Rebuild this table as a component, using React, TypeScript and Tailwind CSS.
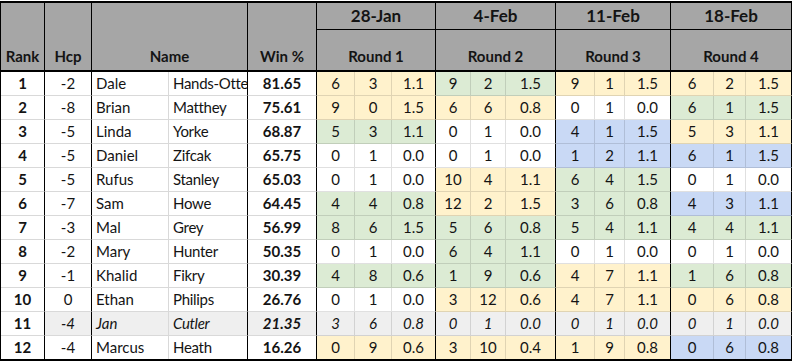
import React from 'react'

type Color = 'y' | 'g' | 'b' | 'w' | 'x'

interface Player {
    rank: number
    hcp: string
    first: string
    last: string
    win: string
    rounds: [string, string, string, Color][]
    muted?: boolean
}

const players: Player[] = [
    { rank: 1, hcp: '-2', first: 'Dale', last: 'Hands-Otte', win: '81.65', rounds: [['6', '3', '1.1', 'y'], ['9', '2', '1.5', 'g'], ['9', '1', '1.5', 'y'], ['6', '2', '1.5', 'y']] },
    { rank: 2, hcp: '-8', first: 'Brian', last: 'Matthey', win: '75.61', rounds: [['9', '0', '1.5', 'y'], ['6', '6', '0.8', 'y'], ['0', '1', '0.0', 'w'], ['6', '1', '1.5', 'g']] },
    { rank: 3, hcp: '-5', first: 'Linda', last: 'Yorke', win: '68.87', rounds: [['5', '3', '1.1', 'g'], ['0', '1', '0.0', 'w'], ['4', '1', '1.5', 'b'], ['5', '3', '1.1', 'y']] },
    { rank: 4, hcp: '-5', first: 'Daniel', last: 'Zifcak', win: '65.75', rounds: [['0', '1', '0.0', 'w'], ['0', '1', '0.0', 'w'], ['1', '2', '1.1', 'b'], ['6', '1', '1.5', 'b']] },
    { rank: 5, hcp: '-5', first: 'Rufus', last: 'Stanley', win: '65.03', rounds: [['0', '1', '0.0', 'w'], ['10', '4', '1.1', 'y'], ['6', '4', '1.5', 'g'], ['0', '1', '0.0', 'w']] },
    { rank: 6, hcp: '-7', first: 'Sam', last: 'Howe', win: '64.45', rounds: [['4', '4', '0.8', 'g'], ['12', '2', '1.5', 'y'], ['3', '6', '0.8', 'g'], ['4', '3', '1.1', 'b']] },
    { rank: 7, hcp: '-3', first: 'Mal', last: 'Grey', win: '56.99', rounds: [['8', '6', '1.5', 'g'], ['5', '6', '0.8', 'g'], ['5', '4', '1.1', 'g'], ['4', '4', '1.1', 'g']] },
    { rank: 8, hcp: '-2', first: 'Mary', last: 'Hunter', win: '50.35', rounds: [['0', '1', '0.0', 'w'], ['6', '4', '1.1', 'g'], ['0', '1', '0.0', 'w'], ['0', '1', '0.0', 'w']] },
    { rank: 9, hcp: '-1', first: 'Khalid', last: 'Fikry', win: '30.39', rounds: [['4', '8', '0.6', 'g'], ['1', '9', '0.6', 'g'], ['4', '7', '1.1', 'y'], ['1', '6', '0.8', 'g']] },
    { rank: 10, hcp: '0', first: 'Ethan', last: 'Philips', win: '26.76', rounds: [['0', '1', '0.0', 'w'], ['3', '12', '0.6', 'y'], ['4', '7', '1.1', 'y'], ['0', '6', '0.8', 'y']] },
    { rank: 11, hcp: '-4', first: 'Jan', last: 'Cutler', win: '21.35', muted: true, rounds: [['3', '6', '0.8', 'x'], ['0', '1', '0.0', 'x'], ['0', '1', '0.0', 'x'], ['0', '1', '0.0', 'x']] },
    { rank: 12, hcp: '-4', first: 'Marcus', last: 'Heath', win: '16.26', rounds: [['0', '9', '0.6', 'y'], ['3', '10', '0.4', 'y'], ['1', '9', '0.8', 'y'], ['0', '6', '0.8', 'b']] },
]

const fills: Record<Color, string> = {
    y: 'bg-[#fff2cc]',
    g: 'bg-[#dcebd4]',
    b: 'bg-[#c9d9f5]',
    w: 'bg-white',
    x: 'bg-[#efefef]',
}

const dates = ['28-Jan', '4-Feb', '11-Feb', '18-Feb']

export default function App() {
    return (
        <div className="w-[792px] h-[361px] bg-white pt-px font-['Lato','Open_Sans',sans-serif] text-[#141414] overflow-hidden">
            <div className="grid grid-cols-[44px_47px_77px_79px_69px_38px_37px_44px_35px_35px_50px_39px_30px_46px_43px_32px_46px] border-l border-t-2 border-b-2 border-black">
                {/* Header */}
                <div className="row-span-2 h-[69px] bg-[#a6a6a6] border-r border-b-2 border-black flex items-end justify-center pb-[3px] font-bold text-[15px]">Rank</div>
                <div className="row-span-2 h-[69px] bg-[#a6a6a6] border-r border-b-2 border-black flex items-end justify-center pb-[3px] font-bold text-[15px]">Hcp</div>
                <div className="col-span-2 row-span-2 h-[69px] bg-[#a6a6a6] border-r border-b-2 border-black flex items-end justify-center pb-[3px] font-bold text-[15px]">Name</div>
                <div className="row-span-2 h-[69px] bg-[#a6a6a6] border-r border-b-2 border-black flex items-end justify-center pb-[3px] font-bold text-[15px]">Win %</div>
                {dates.map((d) => (
                    <div key={d} className="col-span-3 h-[27px] bg-[#a6a6a6] border-r border-b border-black flex items-center justify-center font-bold text-[17px]">{d}</div>
                ))}
                {dates.map((d, i) => (
                    <div key={'r' + d} className="col-span-3 h-[42px] bg-[#a6a6a6] border-r border-b-2 border-black flex items-end justify-center pb-[3px] font-bold text-[15px]">Round {i + 1}</div>
                ))}

                {/* Rows */}
                {players.map((p, ri) => {
                    const last = ri === players.length - 1
                    const h = last ? 'h-[23px]' : 'h-6 border-b border-b-[#d9d9d9]'
                    const rowBg = p.muted ? 'bg-[#efefef]' : 'bg-white'
                    const it = p.muted ? 'italic' : ''
                    return (
                        <React.Fragment key={p.rank}>
                            <div className={`${h} bg-white border-r border-r-black flex items-center justify-center font-bold text-[15px]`}>{p.rank}</div>
                            <div className={`${h} ${rowBg} ${it} border-r border-r-black flex items-center justify-center text-[15px]`}>{p.hcp}</div>
                            <div className={`${h} ${rowBg} ${it} border-r border-r-[#d9d9d9] flex items-center pl-1 text-[15px] whitespace-nowrap overflow-hidden`}>{p.first}</div>
                            <div className={`${h} ${rowBg} ${it} border-r border-r-black flex items-center pl-1 text-[15px] tracking-[-0.3px] whitespace-nowrap overflow-hidden`}>{p.last}</div>
                            <div className={`${h} ${rowBg} ${it} border-r border-r-black flex items-center justify-center font-bold text-[15px]`}>{p.win}</div>
                            {p.rounds.map((r, ci) => (
                                <React.Fragment key={ci}>
                                    {[r[0], r[1], r[2]].map((v, k) => (
                                        <div
                                            key={k}
                                            className={`${last ? 'h-[23px]' : 'h-6 border-b border-b-black/[0.12]'} ${fills[r[3]]} ${it} border-r ${k === 2 ? 'border-r-black' : 'border-r-black/[0.12]'} flex items-center justify-center text-[15px]`}
                                        >
                                            {v}
                                        </div>
                                    ))}
                                </React.Fragment>
                            ))}
                        </React.Fragment>
                    )
                })}
            </div>
        </div>
    )
}
